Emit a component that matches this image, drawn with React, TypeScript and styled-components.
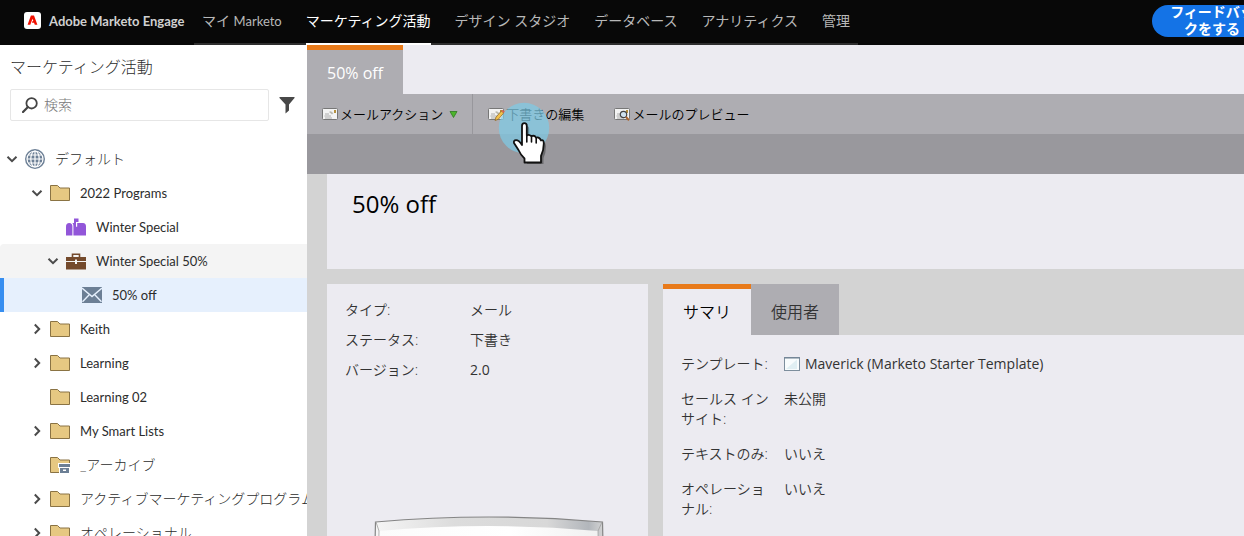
import React from 'react';
import styled, { createGlobalStyle } from 'styled-components';

const GlobalStyle = createGlobalStyle`
  *, *::before, *::after { box-sizing: border-box; }
  body { margin: 0; overflow: hidden; }
  button, input { font: inherit; color: inherit; }
  a { color: inherit; text-decoration: none; }
  h1, h2, dl, dd, dt, ul { margin: 0; padding: 0; font-weight: 400; }
  svg { flex: none; }
`;

const Page = styled.div`
  display: flex;
  flex-direction: column;
  height: 100vh;
  overflow: hidden;
  font-family: 'Open Sans', 'Noto Sans CJK JP', sans-serif;
  font-size: 14px;
  line-height: 20px;
  font-weight: 400;
  color: #333;
  background: #d3d3d3;
`;

const Header = styled.header`
  display: flex;
  flex: none;
  align-items: center;
  height: 45px;
  padding-left: 24px;
  overflow: hidden;
  background: #080808;
  font-family: Lato, 'Noto Sans CJK JP', sans-serif;
  white-space: nowrap;
`;

const Brand = styled.a`
  display: flex;
  flex: none;
  align-items: center;
  gap: 8px;
  width: 170px;
  height: 41px;
  align-self: flex-start;
  color: #d0d0d0;
  font-size: 13px;
  font-weight: 700;
`;

const Nav = styled.nav`
  display: flex;
  flex: none;
  align-self: stretch;
  gap: 24px;
  padding: 0 8px;
  box-shadow: inset 0 -2px #2e2e2e;
`;

const NavLink = styled.a<{ $active?: boolean }>`
  padding-top: 11px;
  border-bottom: 2px solid ${p => (p.$active ? '#fff' : 'transparent')};
  color: ${p => (p.$active ? '#fff' : '#b8b8b8')};
`;

const Latin = styled.span`
  font-size: 13px;
`;

const Feedback = styled.button`
  display: flex;
  flex: none;
  align-items: center;
  width: 120px;
  height: 32px;
  margin: 0 -28px 3px auto;
  padding: 0 18px 3px;
  border: 0;
  border-radius: 16px;
  background: #1473e6;
  color: #fff;
  font-weight: 700;
  line-height: 17px;
  text-align: center;
  white-space: normal;
  word-break: break-all;
`;

const Body = styled.div`
  display: flex;
  flex: 1;
  min-height: 0;
`;

const Sidebar = styled.aside`
  flex: none;
  width: 307px;
  overflow: hidden;
  background: #fff;
  color: #2c2c2c;
  font-family: Lato, 'Noto Sans CJK JP', sans-serif;
`;

const SideTitle = styled.h2`
  padding: 12px 10px;
  font-size: 16px;
  line-height: 20px;
  font-weight: 300;
`;

const SearchRow = styled.div`
  display: flex;
  align-items: center;
  gap: 10px;
  padding: 0 10px;
`;

const SearchField = styled.label`
  display: flex;
  align-items: center;
  gap: 6px;
  width: 259px;
  height: 32px;
  padding: 0 11px;
  border: 1px solid #e6e6e6;
  border-radius: 2px;
`;

const SearchInput = styled.input`
  flex: 1;
  min-width: 0;
  padding: 0;
  border: 0;
  outline: 0;
  background: none;
  font-weight: 300;
  &::placeholder { color: #777; opacity: 1; }
`;

const IconButton = styled.button`
  display: flex;
  padding: 0;
  border: 0;
  background: none;
`;

const Tree = styled.ul`
  padding-top: 21px;
  list-style: none;
`;

const indents = [4, 29, 45, 61];

const TreeButton = styled.button<{ $level: number; $state?: 'open' | 'selected' }>`
  display: flex;
  align-items: center;
  width: 100%;
  height: 34px;
  padding: 0 0 0 ${p => indents[p.$level]}px;
  border: 0;
  border-radius: ${p => (p.$state === 'open' ? '4px 0 0 0' : '0')};
  overflow: hidden;
  background: ${p => (p.$state === 'selected' ? '#e6f0fd' : p.$state === 'open' ? '#f4f4f4' : 'none')};
  box-shadow: ${p => (p.$state === 'selected' ? 'inset 4px 0 #378ef0' : 'none')};
  white-space: nowrap;
  text-align: left;
`;

const ChevronBox = styled.span`
  display: flex;
  flex: none;
  justify-content: center;
  width: 16px;
  margin-right: 5px;
`;

const TreeIcon = styled.span`
  display: flex;
  flex: none;
  width: 20px;
  margin-right: 10px;
`;

const TreeLabel = styled.span<{ $light?: boolean }>`
  font-size: ${p => (p.$light ? 14 : 13)}px;
  font-weight: ${p => (p.$light ? 300 : 400)};
`;

const Main = styled.main`
  display: flex;
  flex: 1;
  flex-direction: column;
  min-width: 0;
`;

const DocTabs = styled.div`
  display: flex;
  flex: none;
  height: 49px;
  background: #ecebf1;
`;

const DocTab = styled.button`
  padding: 2px 20px 0;
  border: 0;
  border-top: 5px solid #e87a1a;
  background: #aeadb2;
  color: #fff;
  font-size: 16px;
`;

const Toolbar = styled.div`
  display: flex;
  flex: none;
  height: 40px;
  background: #aeadb2;
  color: #000;
  font-size: 13px;
  font-weight: 350;
`;

const ToolGroup = styled.div<{ $divided?: boolean }>`
  display: flex;
  gap: 30px;
  padding: 0 14px 0 15px;
  border-right: ${p => (p.$divided ? '1px solid #98979c' : '0')};
`;

const ToolButton = styled.button`
  position: relative;
  display: flex;
  align-items: center;
  gap: 1px;
  padding: 0;
  border: 0;
  background: none;
  white-space: nowrap;
`;

const DropMark = styled.span`
  display: flex;
  margin-left: 5px;
`;

const Pointer = styled.svg`
  position: absolute;
  left: 8px;
  top: 6px;
  z-index: 2;
  pointer-events: none;
`;

const Band = styled.div`
  flex: none;
  height: 40px;
  background: #99989d;
`;

const Content = styled.div`
  display: flex;
  flex: 1;
  flex-direction: column;
  gap: 15px;
  min-height: 0;
  padding-left: 20px;
`;

const TitlePanel = styled.section`
  flex: none;
  height: 95px;
  padding: 14px 25px;
  background: #ecebf1;
`;

const Title = styled.h1`
  color: #000;
  font-size: 24px;
  line-height: 32px;
`;

const Columns = styled.div`
  display: flex;
  flex: 1;
  gap: 15px;
  min-height: 0;
`;

const InfoCard = styled.section`
  display: flex;
  flex: none;
  flex-direction: column;
  gap: 136px;
  width: 321px;
  padding: 16px 18px 0;
  overflow: hidden;
  background: #ecebf1;
`;

const Fields = styled.dl<{ $label: number; $row: number }>`
  display: grid;
  grid-template-columns: ${p => p.$label}px 1fr;
  row-gap: ${p => p.$row}px;
`;

const Term = styled.dt`
  padding-right: 13px;
  font-weight: 350;
  word-break: break-all;
`;

const Value = styled.dd<{ $latin?: boolean }>`
  display: flex;
  align-items: flex-start;
  gap: 5px;
  font-weight: ${p => (p.$latin ? 400 : 350)};
`;

const IconSlot = styled.span`
  display: flex;
  align-items: center;
  height: 20px;
`;

const Device = styled.svg`
  flex: none;
  margin-left: 28px;
`;

const DetailCard = styled.section`
  display: flex;
  flex: 1;
  flex-direction: column;
  min-width: 0;
`;

const DetailTabs = styled.div`
  display: flex;
  flex: none;
  height: 51px;
`;

const DetailTab = styled.button<{ $active?: boolean }>`
  width: 88px;
  padding: ${p => (p.$active ? '0' : '5px 0 0')};
  border: 0;
  border-top: ${p => (p.$active ? '5px solid #e87a1a' : '0')};
  background: ${p => (p.$active ? '#ecebf1' : '#aeadb2')};
  color: ${p => (p.$active ? '#000' : '#333')};
  font-size: 16px;
  font-weight: 350;
`;

const DetailBody = styled.div`
  flex: 1;
  min-height: 0;
  padding: 19px 18px 0;
  overflow: hidden;
  background: #ecebf1;
`;

const AdobeMark = () => (
  <svg width="17" height="17" viewBox="0 0 17 17">
    <rect width="17" height="17" rx="3" fill="#fff" />
    <path d="M6.9 3.5H10L13.4 12.7H10.8L10 10.7H7.9L8.6 9.1H9.3L8.5 6.8L6.3 12.7H3.6Z" fill="#f01000" />
  </svg>
);

const SearchIcon = () => (
  <svg width="16" height="16" viewBox="0 0 16 16" fill="none" stroke="#444">
    <circle cx="9.6" cy="6.3" r="5.2" strokeWidth="1.8" />
    <path d="M5.7 10.2L1 15" strokeWidth="2.2" strokeLinecap="round" />
  </svg>
);

const FilterIcon = () => (
  <svg width="16" height="18" viewBox="0 0 16 18">
    <path d="M0.5 1H15.5V2L10 8.5V14.5L6.5 17.5V8.5L0.5 2Z" fill="#484848" />
  </svg>
);

const Chevron = ({ open }: { open: boolean }) => (
  <svg width="12" height="12" viewBox="0 0 12 12" fill="none" stroke="#4b4b4b" strokeWidth="2">
    <path d={open ? 'M1.5 3.8L6 8.2L10.5 3.8' : 'M3.8 1.5L8.2 6L3.8 10.5'} />
  </svg>
);

const GlobeIcon = () => (
  <svg width="20" height="20" viewBox="0 0 20 20">
    <circle cx="10" cy="10" r="10" fill="#6c7f95" />
    <g fill="none" stroke="#fff" strokeWidth="1.2">
      <circle cx="10" cy="10" r="8" />
      <ellipse cx="10" cy="10" rx="4.2" ry="8" />
      <path d="M10 2V18M2 10H18M3.3 6H16.7M3.3 14H16.7" />
    </g>
  </svg>
);

const FolderIcon = ({ archive }: { archive?: boolean }) => (
  <svg width="20" height="18" viewBox="0 0 20 18">
    <path d="M0.5 16.5V1.5H7.5L10 4H19.5V16.5Z" fill="#e6c882" stroke="#8a7344" />
    {archive && (
      <g>
        <path d="M8 7H20V18H9V12H8Z" fill="#fff" />
        <path d="M9 8H20V11H9ZM10 12H19V17H10Z" fill="#6c7f95" />
        <path d="M13 13.5H16V15H13Z" fill="#fff" />
      </g>
    )}
  </svg>
);

const MailboxIcon = () => (
  <svg width="20" height="18" viewBox="0 0 20 18" fill="#9256d9">
    <path d="M0 17.5V8.5Q0 5 3.2 5T6.4 8.5V17.5Z" />
    <path d="M7.4 17.5V8Q7.4 6 6.4 5H8V0.5H12.5V4H10V8.8H11.2V5H17Q20 5 20 8.5V17.5Z" />
  </svg>
);

const BriefcaseIcon = () => (
  <svg width="20" height="17" viewBox="0 0 20 17">
    <path d="M6.5 4V1.2H13.5V4" fill="none" stroke="#744a2c" strokeWidth="1.6" />
    <path d="M0 4H20V8H11V6.5H9V8H0ZM0 9H9V11H11V9H20V16.5H0Z" fill="#744a2c" />
  </svg>
);

const EnvelopeIcon = () => (
  <svg width="20" height="16" viewBox="0 0 20 16">
    <rect width="20" height="16" fill="#6c7f95" />
    <path d="M0 1L10 9.5L20 1M0.5 14.8L7 8M19.5 14.8L13 8" fill="none" stroke="#e6f0fd" strokeWidth="1.4" />
  </svg>
);

const MailToolIcon = ({ kind }: { kind?: 'edit' | 'preview' }) => (
  <svg width="17" height="14" viewBox="0 0 17 14">
    <rect x="0.5" y="1.5" width="15" height="11" rx="1" fill="#f3f3f3" stroke="#777" />
    <path d="M3 7H7M2.5 9H9M3 11H10" stroke="#999" strokeWidth="0.8" />
    <path d="M7 5Q8.5 3.5 10 5T12 5.5L10 7.5Z" fill="#b9b9b0" />
    <rect x="12" y="3" width="2" height="3" fill="#b5903c" />
    {kind === 'edit' && (
      <g>
        <path d="M7 13.5L8 10.2L13.3 4L15.8 6L10.3 12.3Z" fill="#f2c14c" stroke="#8e6a2a" strokeWidth="0.8" />
        <path d="M13.3 4L14.4 2.8L16.8 4.8L15.8 6Z" fill="#d96450" />
      </g>
    )}
    {kind === 'preview' && (
      <g>
        <circle cx="9.5" cy="7.5" r="3.2" fill="#cfe2ef" stroke="#444" strokeWidth="1.2" />
        <path d="M12 10L15 13.2" stroke="#a9632e" strokeWidth="2" />
      </g>
    )}
  </svg>
);

const TemplateIcon = () => (
  <svg width="16" height="14" viewBox="0 0 16 14">
    <rect x="0.5" y="0.5" width="15" height="13" fill="#f8fcfd" stroke="#7d8e9d" />
    <path d="M0.5 1H15.5" stroke="#6c7f90" />
    <path d="M2 12L13 2.5V12Z" fill="#e0eff3" />
  </svg>
);

const PointerOverlay = () => (
  <Pointer width="60" height="66" viewBox="0 0 60 66" aria-hidden="true">
    <circle cx="28" cy="28" r="25.2" fill="#7ecae4" fillOpacity="0.72" />
    <path
      d="M26 27Q26 24 28.6 24Q31.2 24 31.2 27V36Q33 34.5 35.5 36.6Q38.5 35.2 40 38.2Q43 37 45.5 39.5Q48 41 48 44Q48 51 45.5 56V62H29V59Q26 56 23.5 52L18.5 44.5Q18 41 21 41Q23.5 41 26 44Z"
      fill="#000"
      fillOpacity="0.3"
      transform="translate(2 2)"
    />
    <path
      d="M26 26Q26 23.2 28.4 23.2Q30.8 23.2 30.8 26V35.5Q33 34 35.3 36.2Q38.5 34.8 40 37.6Q43.5 36.6 45 40.5Q47.8 39.2 47.8 43.5Q47.8 50 45 56V62.5H28.5V58.5Q25 55.5 22.5 50L18 43Q17.3 40.2 20 40.2Q23 40.2 26 45Z"
      fill="#fff"
      stroke="#111"
      strokeWidth="1.8"
      strokeLinejoin="round"
    />
    <path d="M30.8 35V42M35.5 36.5V42M40.2 38V43" stroke="#111" strokeWidth="1.6" strokeLinecap="round" />
  </Pointer>
);

const DeviceDrawing = () => (
  <Device width="232" height="120" viewBox="0 0 232 120" aria-hidden="true">
    <defs>
      <linearGradient id="frame" x1="0" x2="1" y1="0" y2="0">
        <stop offset="0" stopColor="#f6f6f6" />
        <stop offset="0.35" stopColor="#dcdcdc" />
        <stop offset="0.75" stopColor="#d8d8d8" />
        <stop offset="0.93" stopColor="#b2b6bb" />
        <stop offset="1" stopColor="#d8d8d8" />
      </linearGradient>
      <linearGradient id="screen" x1="0" x2="1" y1="0" y2="0">
        <stop offset="0" stopColor="#fbfbfb" />
        <stop offset="0.6" stopColor="#fff" />
        <stop offset="1" stopColor="#f0f0f0" />
      </linearGradient>
    </defs>
    <path d="M2.5 6Q116 -4 229.5 6L232 120H0Z" fill="url(#frame)" stroke="#858585" strokeWidth="1.2" />
    <path d="M6 15Q116 5 225 15L227 120H4Z" fill="url(#screen)" />
    <path d="M3 6L6 15L4 120M229 6L225 15L227 120" fill="none" stroke="#a0a0a0" strokeWidth="0.8" />
  </Device>
);

type Item = {
  label: string;
  level: number;
  open?: boolean;
  icon: React.ReactNode;
  state?: 'open' | 'selected';
  light?: boolean;
};

const items: Item[] = [
  { label: 'デフォルト', level: 0, open: true, icon: <GlobeIcon />, light: true },
  { label: '2022 Programs', level: 1, open: true, icon: <FolderIcon /> },
  { label: 'Winter Special', level: 2, icon: <MailboxIcon /> },
  { label: 'Winter Special 50%', level: 2, open: true, icon: <BriefcaseIcon />, state: 'open' },
  { label: '50% off', level: 3, icon: <EnvelopeIcon />, state: 'selected' },
  { label: 'Keith', level: 1, open: false, icon: <FolderIcon /> },
  { label: 'Learning', level: 1, open: false, icon: <FolderIcon /> },
  { label: 'Learning 02', level: 1, icon: <FolderIcon /> },
  { label: 'My Smart Lists', level: 1, open: false, icon: <FolderIcon /> },
  { label: '_アーカイブ', level: 1, icon: <FolderIcon archive />, light: true },
  { label: 'アクティブマーケティングプログラム', level: 1, open: false, icon: <FolderIcon />, light: true },
  { label: 'オペレーショナル', level: 1, open: false, icon: <FolderIcon />, light: true },
];

const navItems = ['マーケティング活動', 'デザイン スタジオ', 'データベース', 'アナリティクス', '管理'];

export default function App() {
  return (
    <Page lang="ja">
      <GlobalStyle />
      <Header>
        <Brand href="#">
          <AdobeMark />
          Adobe Marketo Engage
        </Brand>
        <Nav>
          <NavLink href="#">
            マイ <Latin>Marketo</Latin>
          </NavLink>
          {navItems.map((label, i) => (
            <NavLink key={label} href="#" $active={i === 0}>
              {label}
            </NavLink>
          ))}
        </Nav>
        <Feedback>フィードバックをする</Feedback>
      </Header>
      <Body>
        <Sidebar>
          <SideTitle>マーケティング活動</SideTitle>
          <SearchRow>
            <SearchField>
              <SearchIcon />
              <SearchInput type="text" placeholder="検索" aria-label="検索" />
            </SearchField>
            <IconButton aria-label="フィルター">
              <FilterIcon />
            </IconButton>
          </SearchRow>
          <Tree>
            {items.map(item => (
              <li key={item.label}>
                <TreeButton $level={item.level} $state={item.state}>
                  <ChevronBox>{item.open !== undefined && <Chevron open={item.open} />}</ChevronBox>
                  <TreeIcon>{item.icon}</TreeIcon>
                  <TreeLabel $light={item.light}>{item.label}</TreeLabel>
                </TreeButton>
              </li>
            ))}
          </Tree>
        </Sidebar>
        <Main>
          <DocTabs>
            <DocTab>50% off</DocTab>
          </DocTabs>
          <Toolbar>
            <ToolGroup $divided>
              <ToolButton>
                <MailToolIcon />
                メールアクション
                <DropMark>
                  <svg width="9" height="8" viewBox="0 0 9 8">
                    <path d="M1 1.5H8L4.5 7.5Z" fill="#4db52c" stroke="#2d7a22" strokeWidth="0.8" />
                  </svg>
                </DropMark>
              </ToolButton>
            </ToolGroup>
            <ToolGroup>
              <ToolButton>
                <MailToolIcon kind="edit" />
                下書きの編集
                <PointerOverlay />
              </ToolButton>
              <ToolButton>
                <MailToolIcon kind="preview" />
                メールのプレビュー
              </ToolButton>
            </ToolGroup>
          </Toolbar>
          <Band />
          <Content>
            <TitlePanel>
              <Title>50% off</Title>
            </TitlePanel>
            <Columns>
              <InfoCard>
                <Fields $label={125} $row={10}>
                  <Term>タイプ:</Term>
                  <Value>メール</Value>
                  <Term>ステータス:</Term>
                  <Value>下書き</Value>
                  <Term>バージョン:</Term>
                  <Value $latin>2.0</Value>
                </Fields>
                <DeviceDrawing />
              </InfoCard>
              <DetailCard>
                <DetailTabs>
                  <DetailTab $active>サマリ</DetailTab>
                  <DetailTab>使用者</DetailTab>
                </DetailTabs>
                <DetailBody>
                  <Fields $label={103} $row={15}>
                    <Term>テンプレート:</Term>
                    <Value $latin>
                      <IconSlot>
                        <TemplateIcon />
                      </IconSlot>
                      Maverick (Marketo Starter Template)
                    </Value>
                    <Term>セールス インサイト:</Term>
                    <Value>未公開</Value>
                    <Term>テキストのみ:</Term>
                    <Value>いいえ</Value>
                    <Term>オペレーショナル:</Term>
                    <Value>いいえ</Value>
                  </Fields>
                </DetailBody>
              </DetailCard>
            </Columns>
          </Content>
        </Main>
      </Body>
    </Page>
  );
}
